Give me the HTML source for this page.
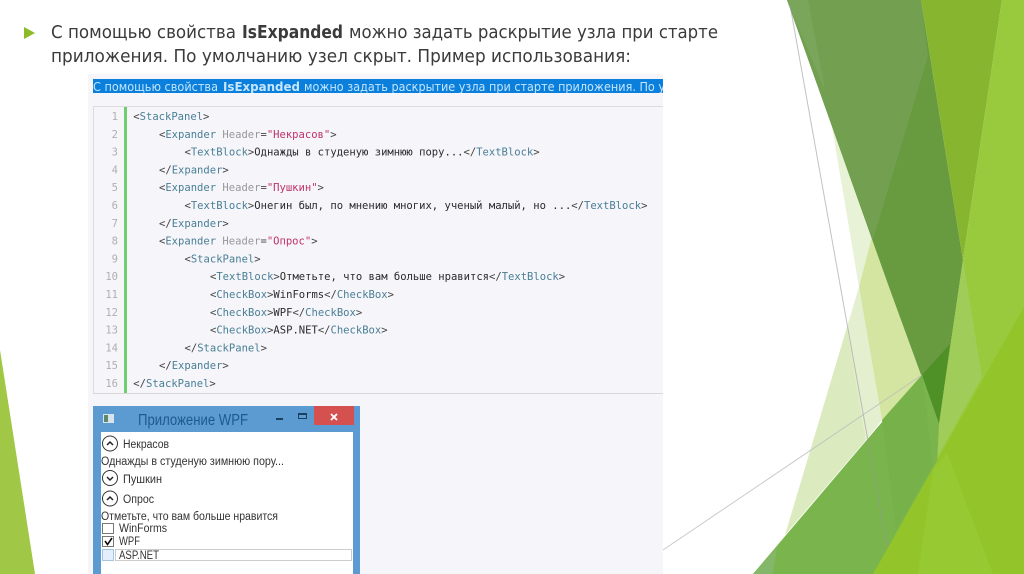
<!DOCTYPE html>
<html lang="ru"><head><meta charset="utf-8"><title>IsExpanded</title>
<style>
html,body{margin:0;padding:0;background:#fff;width:1024px;height:574px;overflow:hidden}
svg{display:block}
.t{font-family:"DejaVu Sans","Liberation Sans",sans-serif;font-size:17.5px;fill:#3a3a3a}
.c{font-family:"DejaVu Sans Mono","Liberation Mono",monospace;font-size:10.54px;fill:#2b2b2b;white-space:pre}
.n{font-family:"DejaVu Sans Mono","Liberation Mono",monospace;font-size:10.54px;fill:#b0b0b0;text-anchor:end}
.g{fill:#4a7f95}.b{fill:#444}.h{fill:#999}.v{fill:#c0326c}
.s{font-family:"DejaVu Sans","Liberation Sans",sans-serif;font-size:12px;fill:#c4e6ff}
.w{font-family:"Liberation Sans",sans-serif;font-size:11.5px;fill:#333}
</style></head><body>
<svg width="1024" height="574" viewBox="0 0 1024 574" xmlns="http://www.w3.org/2000/svg">
<rect width="1024" height="574" fill="#fff"/>
<!-- background shapes -->
<polygon points="0,350 35,574 0,574" fill="#a0c846"/>
<polygon points="832,127 875,233 859,287" fill="#e8f2d6"/>
<polygon points="847,327 866,440 785,535" fill="#dcebbf"/>
<polygon points="859,287 882,420 866,440 847,327" fill="#e4efd0"/>
<polygon points="873,233 924,375 882,420 859,287" fill="#d3e5a0"/>
<polygon points="787,0 921,0 963,260 939,424 889,287" fill="#689a40"/>
<polygon points="787,0 921,0 928,56 873,240" fill="#739f50"/>
<polygon points="787,0 808,0 825,90" fill="#7aa65c"/>
<polygon points="921,0 1002,0 963,260" fill="#87b52f"/>
<polygon points="1002,0 1024,0 1024,574 917,574 939,424 963,260" fill="#99c93c"/>
<polygon points="963,260 982,377 933,465 939,424" fill="#a0cc5a"/>
<polygon points="950,344 922,375 939,424" fill="#4f9127"/>
<polygon points="922,375 939,424 937,465 878,574 753,574" fill="#7ab44c"/>
<polygon points="754,574 777,547 773,574" fill="#84b76a"/>
<polygon points="882,420 922,375 933,465 896,530" fill="#77b14a"/>
<polygon points="1024,307 1024,574 873,574" fill="#93c42a"/>
<polygon points="918,574 933,470 947,453 993,574" fill="#97c932"/>
<line x1="790" y1="5" x2="887" y2="547" stroke="#9a9a9a" stroke-opacity=".6" stroke-width="1"/>
<line x1="663" y1="550" x2="922" y2="375" stroke="#bdbdbd" stroke-opacity=".8" stroke-width="1"/>
<!-- title -->
<polygon points="24,27 35,33 24,39" fill="#8cbb27"/>
<defs>
<filter id="bl" x="-5%" y="-20%" width="110%" height="140%"><feGaussianBlur stdDeviation="0.3"/></filter>
<clipPath id="sel"><rect x="93" y="79" width="570" height="14"/></clipPath>
</defs>
<g filter="url(#bl)">
<text class="t" x="51" y="38" textLength="185" lengthAdjust="spacingAndGlyphs">С помощью свойства</text>
<text class="t" x="242" y="38" textLength="101" lengthAdjust="spacingAndGlyphs" font-weight="bold">IsExpanded</text>
<text class="t" x="349" y="38" textLength="369" lengthAdjust="spacingAndGlyphs">можно задать раскрытие узла при старте</text>
<text class="t" x="51" y="62" textLength="580" lengthAdjust="spacingAndGlyphs">приложения. По умолчанию узел скрыт. Пример использования:</text>
</g>
<!-- screenshot panel -->
<rect x="88" y="74" width="575" height="500" fill="#f6f6fa"/>
<rect x="93" y="79" width="570" height="14" fill="#0a7fdc"/>
<g clip-path="url(#sel)" filter="url(#bl)">
<text class="s" x="93" y="91" textLength="125" lengthAdjust="spacingAndGlyphs">С помощью свойства</text>
<text class="s" x="223" y="91" textLength="77" lengthAdjust="spacingAndGlyphs" font-weight="bold">IsExpanded</text>
<text class="s" x="304" y="91" textLength="361" lengthAdjust="spacingAndGlyphs">можно задать раскрытие узла при старте приложения. По у</text>
</g>
<!-- code -->
<rect x="93" y="106" width="570" height="288" fill="#f5f5fa"/>
<rect x="93" y="106" width="570" height="1" fill="#dcdcdc"/>
<rect x="93" y="106" width="1" height="288" fill="#dcdcdc"/>
<rect x="93" y="393" width="570" height="1" fill="#d8d8d8"/>
<rect x="124" y="107" width="3" height="286" fill="#6fce6f"/>
<g filter="url(#bl)">
<text class="n" x="118" y="120">1</text>
<text class="n" x="118" y="138">2</text>
<text class="n" x="118" y="155.6">3</text>
<text class="n" x="118" y="173.4">4</text>
<text class="n" x="118" y="191.2">5</text>
<text class="n" x="118" y="209">6</text>
<text class="n" x="118" y="226.8">7</text>
<text class="n" x="118" y="244.6">8</text>
<text class="n" x="118" y="262.4">9</text>
<text class="n" x="118" y="280.2">10</text>
<text class="n" x="118" y="298">11</text>
<text class="n" x="118" y="315.8">12</text>
<text class="n" x="118" y="333.6">13</text>
<text class="n" x="118" y="351.4">14</text>
<text class="n" x="118" y="369.2">15</text>
<text class="n" x="118" y="387">16</text>
<text class="c" x="133.3" y="120"><tspan class="b">&lt;</tspan><tspan class="g">StackPanel</tspan><tspan class="b">&gt;</tspan></text>
<text class="c" x="159" y="138"><tspan class="b">&lt;</tspan><tspan class="g">Expander</tspan> <tspan class="h">Header</tspan><tspan class="b">=</tspan><tspan class="v">"Некрасов"</tspan><tspan class="b">&gt;</tspan></text>
<text class="c" x="184.5" y="155.6"><tspan class="b">&lt;</tspan><tspan class="g">TextBlock</tspan><tspan class="b">&gt;</tspan>Однажды в студеную зимнюю пору...<tspan class="b">&lt;/</tspan><tspan class="g">TextBlock</tspan><tspan class="b">&gt;</tspan></text>
<text class="c" x="159" y="173.4"><tspan class="b">&lt;/</tspan><tspan class="g">Expander</tspan><tspan class="b">&gt;</tspan></text>
<text class="c" x="159" y="191.2"><tspan class="b">&lt;</tspan><tspan class="g">Expander</tspan> <tspan class="h">Header</tspan><tspan class="b">=</tspan><tspan class="v">"Пушкин"</tspan><tspan class="b">&gt;</tspan></text>
<text class="c" x="184.5" y="209"><tspan class="b">&lt;</tspan><tspan class="g">TextBlock</tspan><tspan class="b">&gt;</tspan>Онегин был, по мнению многих, ученый малый, но ...<tspan class="b">&lt;/</tspan><tspan class="g">TextBlock</tspan><tspan class="b">&gt;</tspan></text>
<text class="c" x="159" y="226.8"><tspan class="b">&lt;/</tspan><tspan class="g">Expander</tspan><tspan class="b">&gt;</tspan></text>
<text class="c" x="159" y="244.6"><tspan class="b">&lt;</tspan><tspan class="g">Expander</tspan> <tspan class="h">Header</tspan><tspan class="b">=</tspan><tspan class="v">"Опрос"</tspan><tspan class="b">&gt;</tspan></text>
<text class="c" x="184.5" y="262.4"><tspan class="b">&lt;</tspan><tspan class="g">StackPanel</tspan><tspan class="b">&gt;</tspan></text>
<text class="c" x="210" y="280.2"><tspan class="b">&lt;</tspan><tspan class="g">TextBlock</tspan><tspan class="b">&gt;</tspan>Отметьте, что вам больше нравится<tspan class="b">&lt;/</tspan><tspan class="g">TextBlock</tspan><tspan class="b">&gt;</tspan></text>
<text class="c" x="210" y="298"><tspan class="b">&lt;</tspan><tspan class="g">CheckBox</tspan><tspan class="b">&gt;</tspan>WinForms<tspan class="b">&lt;/</tspan><tspan class="g">CheckBox</tspan><tspan class="b">&gt;</tspan></text>
<text class="c" x="210" y="315.8"><tspan class="b">&lt;</tspan><tspan class="g">CheckBox</tspan><tspan class="b">&gt;</tspan>WPF<tspan class="b">&lt;/</tspan><tspan class="g">CheckBox</tspan><tspan class="b">&gt;</tspan></text>
<text class="c" x="210" y="333.6"><tspan class="b">&lt;</tspan><tspan class="g">CheckBox</tspan><tspan class="b">&gt;</tspan>ASP.NET<tspan class="b">&lt;/</tspan><tspan class="g">CheckBox</tspan><tspan class="b">&gt;</tspan></text>
<text class="c" x="184.5" y="351.4"><tspan class="b">&lt;/</tspan><tspan class="g">StackPanel</tspan><tspan class="b">&gt;</tspan></text>
<text class="c" x="159" y="369.2"><tspan class="b">&lt;/</tspan><tspan class="g">Expander</tspan><tspan class="b">&gt;</tspan></text>
<text class="c" x="133.3" y="387"><tspan class="b">&lt;/</tspan><tspan class="g">StackPanel</tspan><tspan class="b">&gt;</tspan></text>
</g>
<!-- window -->
<rect x="93" y="406" width="267" height="168" fill="#5b9bd2"/>
<rect x="101" y="432" width="252" height="142" fill="#fff"/>
<rect x="314" y="406" width="40" height="19" fill="#d4514f"/>
<g filter="url(#bl)">
<rect x="103" y="414" width="11" height="9" fill="#d7e4ee"/>
<rect x="104" y="415" width="4" height="7" fill="#5a8a6a"/>
<text x="138" y="425" font-family="Liberation Sans,sans-serif" font-size="15.5" fill="#1f5a8c" textLength="110" lengthAdjust="spacingAndGlyphs">Приложение WPF</text>
<rect x="276" y="418" width="7" height="2" fill="#1f3f5f"/>
<rect x="298.500" y="413.500" width="8" height="5" fill="none" stroke="#1f3f5f" stroke-width="1"/>
<rect x="298" y="413" width="9" height="2" fill="#1f3f5f"/>
<path d="M331 414 L337 420 M337 414 L331 420" stroke="#fff" stroke-width="1.800" fill="none"/>
<circle cx="110" cy="443.500" r="7.500" fill="#fff" stroke="#333" stroke-width="1"/>
<path d="M107 445 L110 442 L113 445" stroke="#222" stroke-width="1.500" fill="none"/>
<text class="w" x="123" y="448" textLength="46" lengthAdjust="spacingAndGlyphs">Некрасов</text>
<text class="w" x="101" y="465" textLength="183" lengthAdjust="spacingAndGlyphs">Однажды в студеную зимнюю пору...</text>
<circle cx="110" cy="478" r="7.500" fill="#fff" stroke="#333" stroke-width="1"/>
<path d="M107 477 L110 480 L113 477" stroke="#222" stroke-width="1.500" fill="none"/>
<text class="w" x="123" y="483" textLength="39" lengthAdjust="spacingAndGlyphs">Пушкин</text>
<circle cx="110" cy="498.500" r="7.500" fill="#fff" stroke="#333" stroke-width="1"/>
<path d="M107 500 L110 497 L113 500" stroke="#222" stroke-width="1.500" fill="none"/>
<text class="w" x="123" y="503" textLength="31" lengthAdjust="spacingAndGlyphs">Опрос</text>
<text class="w" x="101" y="520" textLength="177" lengthAdjust="spacingAndGlyphs">Отметьте, что вам больше нравится</text>
<rect x="102.500" y="523.500" width="11" height="10" fill="#fff" stroke="#777" stroke-width="1"/>
<text class="w" x="119" y="532" textLength="48" lengthAdjust="spacingAndGlyphs">WinForms</text>
<rect x="102.500" y="536.500" width="11" height="10" fill="#fff" stroke="#777" stroke-width="1"/>
<path d="M105 541 L107.500 544.500 L112 538" stroke="#111" stroke-width="1.600" fill="none"/>
<text class="w" x="119" y="545" textLength="21" lengthAdjust="spacingAndGlyphs">WPF</text>
<rect x="102.500" y="549.500" width="11" height="11" fill="#e3effa" stroke="#a5c4e0" stroke-width="1"/>
<rect x="115.500" y="549.500" width="236" height="11" fill="none" stroke="#999" stroke-width="1" stroke-dasharray="1 1"/>
<text class="w" x="119" y="559" textLength="40" lengthAdjust="spacingAndGlyphs">ASP.NET</text>
</g>
</svg>
</body></html>
